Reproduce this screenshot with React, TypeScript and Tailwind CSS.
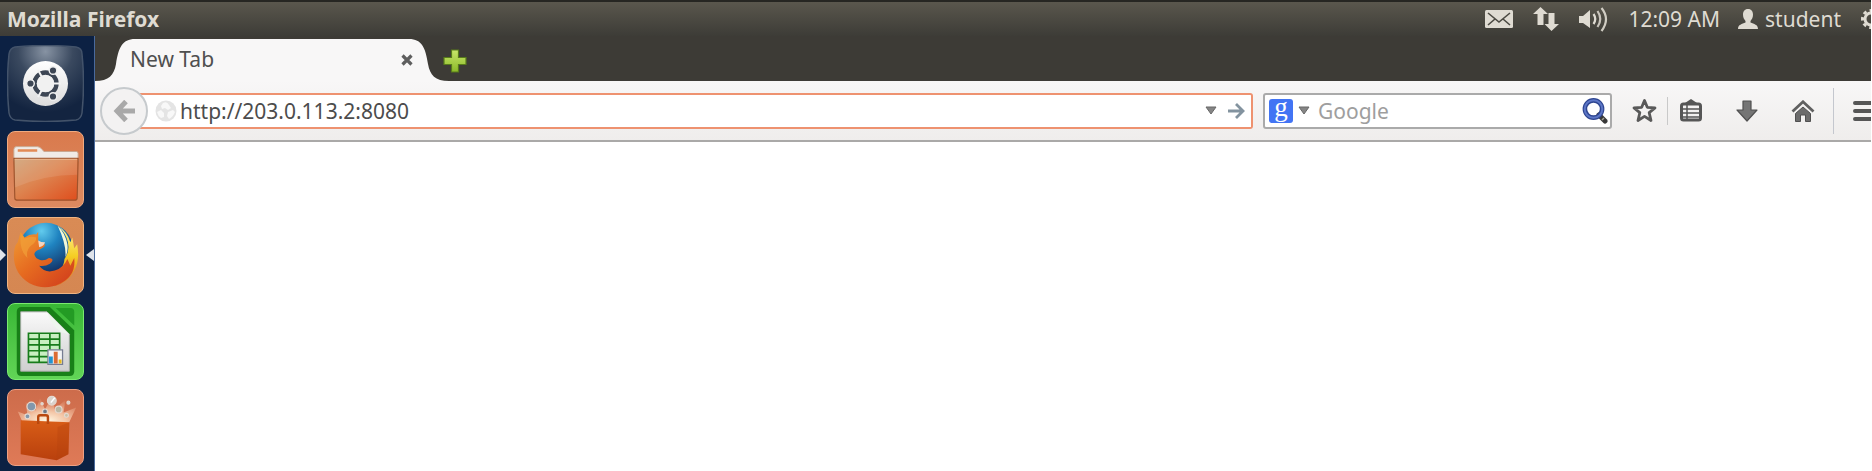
import type { ReactNode } from "react";

function UbuntuIcon() {
  return (
    <svg viewBox="0 0 77 77" className="size-full">
      <defs>
        <radialGradient id="dash" cx="50%" cy="8%" r="80%">
          <stop offset="0" stopColor="#8793a3" />
          <stop offset=".45" stopColor="#3a495f" />
          <stop offset="1" stopColor="#132440" />
        </radialGradient>
        <linearGradient id="disc" x1="0" y1="0" x2="0" y2="1">
          <stop offset="0" stopColor="#fff" />
          <stop offset="1" stopColor="#dcdcdc" />
        </linearGradient>
      </defs>
      <path d="M8 2Q38 -1 69 2Q75 3 75 9Q78 38 75 68Q74 74 69 75Q38 78 8 75Q3 74 2 68Q-1 38 2 9Q3 3 8 2Z" fill="url(#dash)" stroke="#43536a" strokeWidth="1.5" />
      <circle cx="38.5" cy="38.5" r="22.5" fill="url(#disc)" />
      <circle cx="38.5" cy="38.5" r="11" fill="none" stroke="#3d4654" strokeWidth="4.4" />
      <g stroke="#f2f2f2" strokeWidth="2">
        <path d="M38.5 38.5L54 38.5M38.5 38.5L31 25M38.5 38.5L31 52" />
      </g>
      <circle cx="38.5" cy="38.5" r="8.6" fill="#f1f1f1" />
      <g fill="#3d4654" stroke="#f0f0f0" strokeWidth="1.4">
        <circle cx="23.5" cy="38.5" r="3.8" />
        <circle cx="46" cy="25.5" r="3.8" />
        <circle cx="46" cy="51.5" r="3.8" />
      </g>
    </svg>
  );
}

function FolderIcon() {
  return (
    <svg viewBox="0 0 77 77" className="size-full">
      <defs>
        <linearGradient id="folder" x1="0" y1="0" x2="1" y2="1">
          <stop offset="0" stopColor="#cfa277" />
          <stop offset=".45" stopColor="#dd8450" />
          <stop offset="1" stopColor="#df4d1c" />
        </linearGradient>
      </defs>
      <path d="M6 30V18Q6 15 9 15H30Q33 15 35 18L37 20H70Q72 20 72 22V30Z" fill="#f0ebe7" stroke="#c9a78f" />
      <path d="M10 19H30" stroke="#e28a55" strokeWidth="2.5" />
      <path d="M6 27H72L71 68Q71 70 68 70H10Q7 70 7 68Z" fill="url(#folder)" stroke="#9e532c" strokeWidth="1.2" />
      <path d="M7 28H71V44Q38 44 7 57Z" fill="#fff" opacity=".1" />
      <path d="M7 28H71" stroke="#edba93" />
    </svg>
  );
}

function FirefoxIcon() {
  return (
    <svg viewBox="0 0 77 77" className="size-full">
      <defs>
        <radialGradient id="globe" cx="42%" cy="15%" r="80%">
          <stop offset="0" stopColor="#62cbed" />
          <stop offset=".4" stopColor="#1f83c0" />
          <stop offset="1" stopColor="#132f63" />
        </radialGradient>
        <linearGradient id="fox" x1="0" y1="0" x2="1" y2="1">
          <stop offset="0" stopColor="#ef9b35" />
          <stop offset=".45" stopColor="#e66b20" />
          <stop offset="1" stopColor="#cf391c" />
        </linearGradient>
        <linearGradient id="tail" x1="0" y1="0" x2="0" y2="1">
          <stop offset="0" stopColor="#fff3a0" />
          <stop offset=".5" stopColor="#f5ce24" />
          <stop offset="1" stopColor="#df681d" />
        </linearGradient>
      </defs>
      <circle cx="39" cy="33" r="28" fill="url(#globe)" />
      <path d="M51 8Q61 14 64 25L66 20L68 31L71 27Q74 43 68 54Q62 66 48 70L42 62Q57 55 58 42Q65 32 60 20Q57 13 51 8Z" fill="url(#tail)" />
      <path d="M51 8Q59 16 61 27Q62 35 59 40Q60 27 51 8Z" fill="#f3f8d8" />
      <path d="M13 14L17 20Q23 16 29 17L31 14L31 23Q33 26 38 27Q38 30 33 32Q28 33 27 37Q28 42 33 43Q38 44 42 41Q49 42 43 47Q38 50 32 49Q38 57 48 54Q57 51 61 42L64 49L68 41Q70 59 54 67Q38 75 22 67Q6 57 6 39Q6 29 10 25Z" fill="url(#fox)" />
      <path d="M13 15L17 21Q24 18 29 20Q29 25 24 28Q18 33 20 41Q11 33 13 15Z" fill="#f3a53b" opacity=".6" />
      <path d="M31 23Q34 25 38 25Q37 29 32 30Z" fill="#f3d5c0" />
    </svg>
  );
}

function CalcIcon() {
  return (
    <svg viewBox="0 0 77 77" className="size-full">
      <defs>
        <linearGradient id="sheet" x1="0" y1="0" x2="0" y2="1">
          <stop offset="0" stopColor="#fafafa" />
          <stop offset="1" stopColor="#cfcfcf" />
        </linearGradient>
      </defs>
      <path d="M14 3H43L68 27V69Q68 74 63 74H14Q9 74 9 69V8Q9 3 14 3Z" fill="#188018" />
      <path d="M49 4H64Q68 4 68 8V22Z" fill="#239b24" />
      <path d="M13 8H40L63 31V69H13Z" fill="url(#sheet)" stroke="#a2a9a2" />
      <path d="M40 8L63 31L55 29Q44 22 40 8Z" fill="#eef6ee" />
      <path d="M21 30H53V60H21Z" fill="#c8efc1" />
      <path d="M21 30H53V60H21ZM21 36H53M21 42H53M21 48H53M21 54H53M32 30V60M43 30V60" fill="none" stroke="#177c1b" strokeWidth="1.7" />
      <path d="M41 47H56V62H41Z" fill="#f3f3f5" stroke="#777d92" strokeWidth="1.3" />
      <path d="M42 54H46V61H42Z" fill="#2394ce" />
      <path d="M47 49H51V61H47Z" fill="#dc6b33" />
      <path d="M52 57H55V61H52Z" fill="#e6b71d" />
    </svg>
  );
}

function SoftwareIcon() {
  return (
    <svg viewBox="0 0 77 77" className="size-full">
      <defs>
        <radialGradient id="burst" cx="50%" cy="90%" r="80%">
          <stop offset="0" stopColor="#fffbe8" />
          <stop offset=".4" stopColor="#ffe4c6" stopOpacity=".75" />
          <stop offset="1" stopColor="#ffd0b0" stopOpacity="0" />
        </radialGradient>
        <linearGradient id="bag" x1="0" y1="0" x2="0" y2="1">
          <stop offset="0" stopColor="#d85d17" />
          <stop offset="1" stopColor="#b9400d" />
        </linearGradient>
      </defs>
      <path d="M15 33L10 22L20 26L18 12L28 21L33 8L38 20L46 5L48 20L59 10L57 23L70 18L62 35Z" fill="url(#burst)" />
      <g stroke="#e3d8d0" strokeWidth="1.2">
        <circle cx="24" cy="17" r="4.5" fill="#8297ac" />
        <circle cx="45" cy="11" r="4.5" fill="#d9d3cd" />
        <circle cx="38" cy="22" r="2.5" fill="#6e7885" />
        <circle cx="52" cy="20" r="3.5" fill="#b9b6a2" />
        <circle cx="20" cy="27" r="2.5" fill="#8297ac" />
        <circle cx="35" cy="14" r="1.2" fill="#d9d3cd" />
        <circle cx="62" cy="13" r="1.5" fill="#d9d3cd" />
        <circle cx="60" cy="26" r="2" fill="#c9c0a5" />
      </g>
      <path d="M44 13L48 8" stroke="#fff" strokeWidth="1.5" />
      <path d="M13 31L63 33L62 66L50 72L13 66Z" fill="url(#bag)" />
      <path d="M63 33L51 38L50 72L62 66Z" fill="#b4410f" opacity=".35" />
      <path d="M31 35V28Q31 26 33 26H39Q41 26 41 28V35" fill="none" stroke="#b9480f" strokeWidth="2.5" />
    </svg>
  );
}

const launchers: { name: string; tile: string; icon: ReactNode; active?: boolean }[] = [
  { name: "Dash", tile: "", icon: <UbuntuIcon /> },
  { name: "Files", tile: "bg-linear-to-b from-[#d97a4d] to-[#dd8a60] border border-[#f0aa80]", icon: <FolderIcon /> },
  { name: "Firefox", tile: "bg-linear-to-b from-[#d98b55] to-[#d58752] border border-[#f0b482]", icon: <FirefoxIcon />, active: true },
  { name: "Calc", tile: "bg-linear-to-b from-[#38b735] to-[#61d556] border border-[#7bea70]", icon: <CalcIcon /> },
  { name: "Software", tile: "bg-linear-to-b from-[#cd6c4b] to-[#df7a57] border border-[#eea083]", icon: <SoftwareIcon /> },
];

function Launcher() {
  return (
    <nav className="flex w-[95px] shrink-0 flex-col gap-[9px] border-r border-[#4a6a9c] bg-[#0c2143] pt-[9px] pl-[7px]">
      {launchers.map((l) => (
        <div key={l.name} className="relative">
          <button aria-label={l.name} className={`block size-[77px] overflow-hidden rounded-lg ${l.tile}`}>
            {l.icon}
          </button>
          {l.active && (
            <>
              <svg viewBox="0 0 6 12" className="absolute top-8 -left-[7px] h-3 w-1.5" fill="#dfe3ea"><path d="M0 0L6 6L0 12Z" /></svg>
              <svg viewBox="0 0 8 12" className="absolute top-8 right-0 h-3 w-2" fill="#dfe3ea"><path d="M8 0L0 6L8 12Z" /></svg>
            </>
          )}
        </div>
      ))}
    </nav>
  );
}

function TopBar() {
  return (
    <header className="flex h-9 items-center overflow-hidden border-t-2 border-[#262622] bg-linear-to-b from-[#5a574d] to-[#3d3c37] pl-[7px] text-[21px] leading-8 text-[#dfdbd2]">
      <h1 className="font-bold whitespace-nowrap">Mozilla Firefox</h1>
      <div className="ml-auto flex shrink-0 items-center whitespace-nowrap">
        <svg viewBox="0 0 28 18" className="mr-5 h-[18px] w-7">
          <rect width="28" height="18" rx="1.5" fill="#dfdbd2" />
          <path d="M3 3L14 12L25 3M3 15L10 9M25 15L18 9" fill="none" stroke="#4b4942" strokeWidth="1.6" />
        </svg>
        <svg viewBox="0 0 26 24" className="mr-5 h-6 w-[26px]" fill="#dfdbd2">
          <path d="M7.500 0L15 7H10.500V18H4.500V7H0ZM18.500 24L11.500 17H15.500V6H21.500V17H26Z" />
        </svg>
        <svg viewBox="0 0 30 26" className="mr-[19px] h-[26px] w-[30px]" fill="none" stroke="#dfdbd2" strokeWidth="2.200">
          <path d="M0 10H4L11 4V22L4 17H0Z" fill="#dfdbd2" stroke="none" />
          <path d="M14.500 8Q18 13 14.500 18" />
          <path d="M18.500 5Q24 13 18.500 21" opacity=".85" />
          <path d="M22.500 2Q31.500 13 22.500 25" opacity=".9" />
        </svg>
        <span className="mr-[18px]">12:09 AM</span>
        <svg viewBox="0 0 20 20" className="mr-[7px] size-5" fill="#dfdbd2">
          <path d="M10 0C13.500 0 15 2.500 15 5.500C15 8.500 14 10 12.500 12V13.500C16 15 20 15.500 20 20H0C0 15.500 4 15 7.500 13.500V12C6 10 5 8.500 5 5.500C5 2.500 6.500 0 10 0Z" />
        </svg>
        <span className="mr-5">student</span>
        <div className="w-2.5 overflow-hidden">
          <svg viewBox="0 0 20 20" className="size-5 max-w-none" fill="none" stroke="#dfdbd2">
            <circle cx="10" cy="10" r="6" strokeWidth="3" />
            <circle cx="10" cy="10" r="8.500" strokeWidth="3" strokeDasharray="3.400 3.276" strokeDashoffset="1.700" />
          </svg>
        </div>
      </div>
    </header>
  );
}

function TabStrip() {
  return (
    <div className="flex h-[45px] items-end bg-[#3d3b36]">
      <svg viewBox="0 0 40 42" className="h-[42px] w-10" fill="#f8f7f7">
        <path d="M0 42C14 42 19 36 21 25C23.500 9 27 0 40 0V42Z" />
      </svg>
      <div className="z-10 -ml-[5px] flex h-[42px] w-[283px] items-center justify-between">
        <span className="text-[21px] text-[#4f4f4f]">New Tab</span>
        <button aria-label="Close tab">
          <svg viewBox="0 0 12 12" className="size-3" stroke="#5e5e5e" strokeWidth="3.200"><path d="M1.500 1.500L10.500 10.500M10.500 1.500L1.500 10.500" /></svg>
        </button>
      </div>
      <div className="-ml-[278px] h-[42px] w-[274px] bg-[#f8f7f7]" />
      <svg viewBox="0 0 40 42" className="h-[42px] w-10" fill="#f8f7f7">
        <path d="M40 42C26 42 21 36 19 25C16.500 9 13 0 0 0V42Z" />
      </svg>
      <button aria-label="New tab" className="-ml-1.5 mb-2">
        <svg viewBox="0 0 24 24" className="size-6">
          <defs>
            <linearGradient id="plus" x1="0" y1="0" x2="0" y2="1">
              <stop offset="0" stopColor="#c8e66a" />
              <stop offset="1" stopColor="#8bb928" />
            </linearGradient>
          </defs>
          <path d="M8.500 1H15.500V8.500H23V15.500H15.500V23H8.500V15.500H1V8.500H8.500Z" fill="url(#plus)" stroke="#587b1b" strokeWidth="1.200" />
        </svg>
      </button>
    </div>
  );
}

function Caret() {
  return (
    <svg viewBox="0 0 12 9" className="h-[9px] w-3" fill="#858585" stroke="#686868"><path d="M1 1H11L6 8Z" /></svg>
  );
}

function Toolbar() {
  return (
    <div className="flex h-[61px] items-center overflow-hidden border-b-2 border-[#aaa9a8] bg-linear-to-b from-[#f8f7f7] to-[#efedec] pl-[5px]">
      <button aria-label="Back" className="relative z-10 flex size-12 shrink-0 items-center justify-center rounded-full border-2 border-[#c6cacd] bg-[#f3f2f2]">
        <svg viewBox="0 0 22 22" className="size-[22px]" fill="none" stroke="#a9a9a9" strokeWidth="5">
          <path d="M13 1.500L4 11L13 20.500M4 11H22" />
        </svg>
      </button>
      <div className="-ml-2 flex h-9 flex-1 items-center rounded-r-[3px] border-2 border-l-0 border-[#ee9270] bg-white pr-1.5 pl-[15px]">
        <svg viewBox="0 0 22 22" className="mr-[3px] size-[22px] shrink-0">
          <circle cx="11" cy="11" r="10.500" fill="#e4e4e4" />
          <path d="M8 3Q12 1 14 5L16 8L13 10L10 8L7 9L6 6ZM2 12L6 10L9 13L9 17L6 18Q3 16 2 12ZM13 12L18 10L20 12Q18 17 14 19L12 16Z" fill="#f8f8f8" />
        </svg>
        <input aria-label="Address" defaultValue="http://203.0.113.2:8080" className="min-w-0 flex-1 bg-transparent pt-0.5 text-[21px] text-[#4c4c4c] outline-none" />
        <button aria-label="History" className="mr-2.5"><Caret /></button>
        <button aria-label="Go">
          <svg viewBox="0 0 18 18" className="size-[18px]" fill="none" stroke="#83939f" strokeWidth="2.800"><path d="M1 9H15M9 2L16 9L9 16" /></svg>
        </button>
      </div>
      <div className="ml-2.5 flex h-9 w-[349px] shrink-0 items-center rounded-[3px] border-2 border-[#aaaaaa] bg-white pr-0.5 pl-1">
        <div className="mr-[5px] flex size-6 justify-center rounded-[3px] bg-[#4274f4] pb-2 font-['Liberation_Serif',serif] text-[27px] leading-4 text-white">
          g
        </div>
        <button aria-label="Search engine" className="mr-2"><Caret /></button>
        <input aria-label="Search" placeholder="Google" className="min-w-0 flex-1 bg-transparent pt-0.5 text-[21px] outline-none placeholder:text-[#9e9e9e]" />
        <button aria-label="Submit search">
          <svg viewBox="0 0 26 26" className="size-[26px]" fill="none">
            <path d="M17 17L23 23" stroke="#383838" strokeWidth="5" strokeLinecap="round" />
            <circle cx="11.500" cy="11" r="8.600" stroke="#2e4590" strokeWidth="4.600" />
            <circle cx="11.500" cy="11" r="8.800" stroke="#5c76c6" strokeWidth="2" />
            <path d="M20 22L22 20" stroke="#a1a092" strokeWidth="1.500" />
          </svg>
        </button>
      </div>
      <div className="flex shrink-0 items-center pl-5">
        <button aria-label="Bookmark" className="mr-2.5">
          <svg viewBox="0 0 25 25" className="size-[25px]" fill="none" stroke="#595959" strokeWidth="2.800" strokeLinejoin="round">
            <path d="M12.500 2.500L15.300 9.300L23 9.900L17.200 14.700L19 22.500L12.500 18.400L6 22.500L7.800 14.700L2 9.900L9.700 9.300Z" />
          </svg>
        </button>
        <div className="h-7 w-px bg-[#c9c9c9]" />
        <button aria-label="Bookmarks menu" className="ml-3">
          <svg viewBox="0 0 22 23" className="h-[23px] w-[22px]" fill="none" stroke="#565656">
            <rect x="1.500" y="5" width="19" height="16" rx="2" strokeWidth="3" />
            <path d="M5 4L11 0L17 4Z" fill="#565656" stroke="none" />
            <path d="M3 10H19M3 14H19M3 18H19" strokeWidth="1.600" />
            <path d="M7 6V20" strokeWidth="1.500" />
          </svg>
        </button>
        <button aria-label="Downloads" className="ml-[34px]">
          <svg viewBox="0 0 22 22" className="size-[22px]" fill="#757575" stroke="#505050" strokeWidth="1.200" strokeLinejoin="round"><path d="M7 1H15V10H21L11 21L1 10H7Z" /></svg>
        </button>
        <button aria-label="Home" className="ml-[33px]">
          <svg viewBox="0 0 24 22" className="h-[22px] w-6">
            <path d="M12 7L19.500 13.500V21.500H14.500V15H9.500V21.500H4.500V13.500Z" fill="#6c6c6c" stroke="#505050" />
            <path d="M1.500 11.500L12 1.800L22.500 11.500" fill="none" stroke="#606060" strokeWidth="2.800" />
          </svg>
        </button>
        <div className="ml-[18px] h-[46px] w-px bg-[#c4c7ce]" />
        <button aria-label="Menu" className="ml-[19px] w-[18px] overflow-hidden">
          <svg viewBox="0 0 24 22" className="h-[22px] w-6 max-w-none" stroke="#565656" strokeWidth="4" strokeLinecap="round"><path d="M2 3H22M2 11H22M2 19H22" /></svg>
        </button>
      </div>
    </div>
  );
}

export default function App() {
  return (
    <div className="flex h-screen flex-col overflow-hidden bg-white pr-px font-['Noto_Sans',sans-serif]">
      <TopBar />
      <div className="flex min-h-0 flex-1">
        <Launcher />
        <main className="min-w-0 flex-1 bg-white">
          <TabStrip />
          <Toolbar />
        </main>
      </div>
    </div>
  );
}
